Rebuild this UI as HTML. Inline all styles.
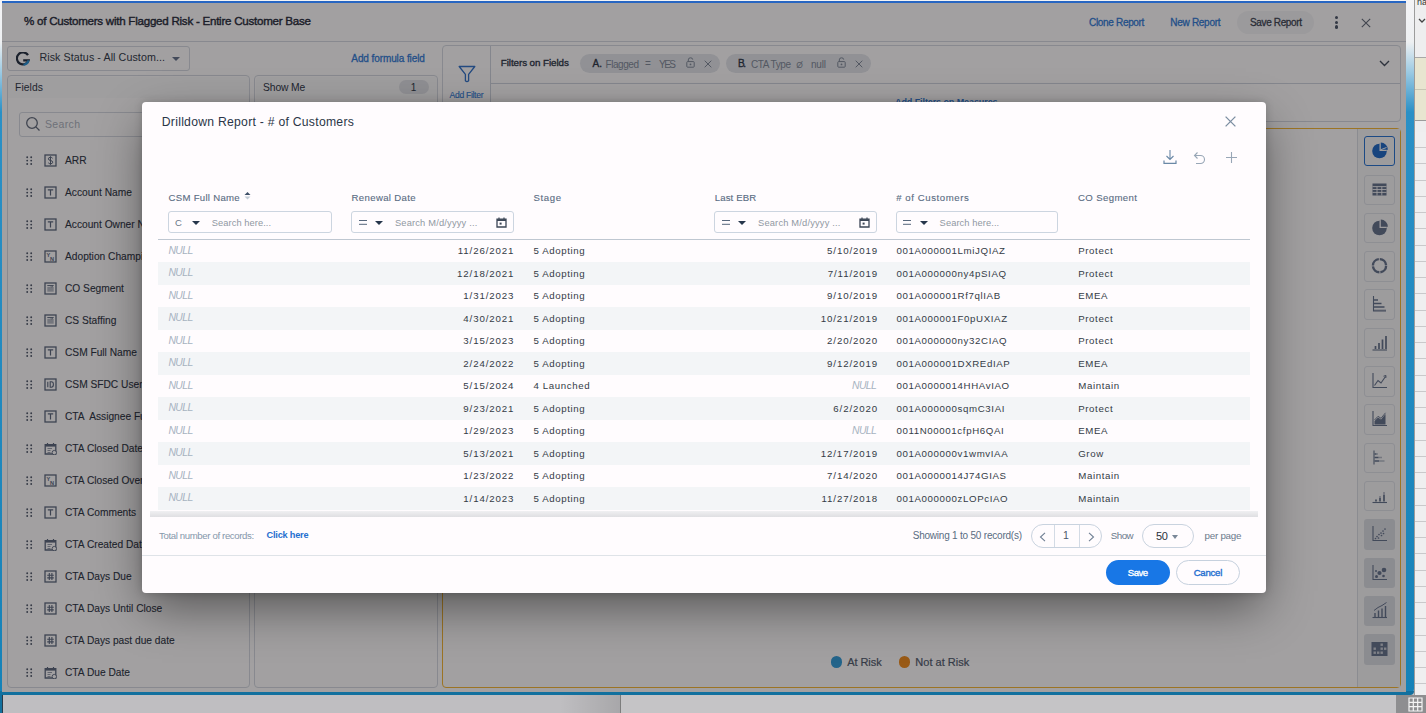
<!DOCTYPE html>
<html><head><meta charset="utf-8">
<style>
*{box-sizing:border-box;margin:0;padding:0}
html,body{width:1426px;height:713px;overflow:hidden;background:#c6c5c7;font-family:"Liberation Sans",sans-serif;position:relative}
.a{position:absolute;white-space:pre}
.L{position:absolute;left:0;top:0;width:1426px;height:713px}
.bx{position:absolute;border:1px solid #d3d9e1;border-radius:4px}
</style></head>
<body>
<!-- desktop / other windows -->
<div class="a" style="left:0;top:695px;width:620px;height:18px;background:#bfbec1"></div>
<div class="a" style="left:0;top:695px;width:2px;height:18px;background:#12709e"></div>
<div class="a" style="left:2px;top:695px;width:1px;height:18px;background:#2a3a48"></div>
<div class="a" style="left:560px;top:695px;width:60px;height:18px;background:linear-gradient(90deg,rgba(0,0,0,0),rgba(0,0,0,.12))"></div>
<div class="a" style="left:620px;top:695px;width:806px;height:18px;background:#c5c4c6;border-left:1px solid #7d7d7d"></div>
<div class="a" style="left:1396px;top:695px;width:30px;height:18px;background:#8e8e90"></div>
<svg class="a" style="left:1408px;top:697px" width="15" height="15" viewBox="0 0 15 15"><path d="M1 1H14V14H1ZM1 5.3H14M1 9.7H14M5.3 1V14M9.7 1V14" fill="none" stroke="#f4f4f4" stroke-width="1.2"/></svg>
<!-- spreadsheet on right -->
<div class="a" style="left:1414px;top:0;width:12px;height:695px;background:#efeff0;border-left:1px solid #9c9c9c;
  background-image:repeating-linear-gradient(180deg,rgba(0,0,0,0) 0,rgba(0,0,0,0) 15.2px,#c9c9cb 15.2px,#c9c9cb 16.25px);background-position:0 132px;background-repeat:repeat-y"></div>
<div class="a" style="left:1415px;top:0;width:11px;height:132px;background:#eeeeef"></div>
<div class="a" style="left:1415px;top:58px;width:11px;height:62px;background:#e8e5d0"></div>
<div class="a" style="left:1415px;top:57px;width:11px;height:1px;background:#a8a8a8"></div>
<div class="a" style="left:1415px;top:89px;width:11px;height:1px;background:#c9c6b4"></div>
<div class="a" style="left:1415px;top:120px;width:11px;height:1px;background:#9c9c9c"></div>
<div class="a" style="left:1417px;top:0;font-size:9px;line-height:4px;color:#333">na</div>
<svg class="a" style="left:1418px;top:18px" width="8" height="6" viewBox="0 0 8 6"><path d="M1 1L4 4L7 1" fill="none" stroke="#444" stroke-width="1.3"/></svg>
<!-- window frame -->
<div class="a" style="left:0;top:0;width:1414px;height:695px;background:linear-gradient(180deg,#f4f4f6 0,#eef0f2 42px,#9ccae3 72px,#2a90c6 112px,#1582b8 100%);border-radius:0 0 6px 0"></div>
<div class="a" style="left:0;top:691px;width:1414px;height:4px;background:#12709e;border-radius:0 0 6px 0"></div>
<!-- app -->
<div class="a" style="left:2px;top:3px;width:1404px;height:689px;overflow:hidden;background:#fff">
<div class="L" style="left:-2px;top:-3px">
<div class="a" style="left:0;top:0;width:1406px;height:42px;background:#fff;border-bottom:1px solid #d3d9e1"></div>
<div class="a" style="left:1237px;top:11px;width:77px;height:23px;border-radius:12px;background:#f4f5f7"></div>
<div class="a" style="left:1334.8px;top:15.9px;width:3.4px;height:3.4px;border-radius:2px;background:#465264"></div>
<div class="a" style="left:1334.8px;top:20.6px;width:3.4px;height:3.4px;border-radius:2px;background:#465264"></div>
<div class="a" style="left:1334.8px;top:25.4px;width:3.4px;height:3.4px;border-radius:2px;background:#465264"></div>
<svg class="a" style="left:1361px;top:18px" width="10" height="10" viewBox="0 0 10 10"><path d="M.8 .8L9.2 9.2M9.2 .8L.8 9.2" stroke="#5e6876" stroke-width="1.1"/></svg>
<div class="bx" style="left:7px;top:45.5px;width:183px;height:25px;border-radius:3px"></div>
<svg class="a" style="left:16px;top:52px" width="14" height="14" viewBox="0 0 14 14"><path d="M12 3.2A6 6 0 1 0 12.6 8.3H7.2" fill="none" stroke="#1d2a3c" stroke-width="2.2"/><path d="M12.6 8.3A6 6 0 0 1 7.5 12.8" fill="none" stroke="#1f8fd6" stroke-width="2.2"/></svg>
<div class="a" style="left:171.5px;top:56.5px;width:0;height:0;border-left:4px solid transparent;border-right:4px solid transparent;border-top:4px solid #607089"></div>
<div class="bx" style="left:7px;top:75px;width:243px;height:612.5px"></div>
<div class="a" style="left:8px;top:76.5px;width:241px;height:21.5px;background:#fafbfc;border-radius:3px 3px 0 0"></div>
<div class="bx" style="left:19px;top:111.5px;width:240px;height:25px;border-radius:3px"></div>
<svg class="a" style="left:25px;top:116px" width="16" height="16" viewBox="0 0 16 16"><circle cx="7" cy="7" r="5.3" fill="none" stroke="#5c6778" stroke-width="1.3"/><path d="M10.9 10.9L14.5 14.5" stroke="#5c6778" stroke-width="1.3"/></svg>
<svg class="a" style="left:26.3px;top:155.8px" width="7" height="10" viewBox="0 0 7 10"><circle cx="1.2" cy="1.2" r=".95" fill="#4a5567"/><circle cx="1.2" cy="4.6" r=".95" fill="#4a5567"/><circle cx="1.2" cy="8" r=".95" fill="#4a5567"/><circle cx="5.2" cy="1.2" r=".95" fill="#4a5567"/><circle cx="5.2" cy="4.6" r=".95" fill="#4a5567"/><circle cx="5.2" cy="8" r=".95" fill="#4a5567"/></svg>
<svg class="a" style="left:43.8px;top:153.9px" width="13" height="13" viewBox="0 0 13 13"><rect x="1" y="1" width="11" height="11" fill="none" stroke="#56647a" stroke-width="1.3"/><path d="M8.6 4.3Q8 3.3 6.5 3.3Q4.4 3.3 4.4 4.9Q4.4 6.2 6.5 6.5Q8.7 6.8 8.7 8.2Q8.7 9.8 6.5 9.8Q5 9.8 4.3 8.8M6.5 2.3V10.8" fill="none" stroke="#56647a" stroke-width="1"/></svg>
<svg class="a" style="left:26.3px;top:187.8px" width="7" height="10" viewBox="0 0 7 10"><circle cx="1.2" cy="1.2" r=".95" fill="#4a5567"/><circle cx="1.2" cy="4.6" r=".95" fill="#4a5567"/><circle cx="1.2" cy="8" r=".95" fill="#4a5567"/><circle cx="5.2" cy="1.2" r=".95" fill="#4a5567"/><circle cx="5.2" cy="4.6" r=".95" fill="#4a5567"/><circle cx="5.2" cy="8" r=".95" fill="#4a5567"/></svg>
<svg class="a" style="left:43.8px;top:185.9px" width="13" height="13" viewBox="0 0 13 13"><rect x="1" y="1" width="11" height="11" fill="none" stroke="#56647a" stroke-width="1.3"/><path d="M3.8 3.8H9.2M6.5 3.8V9.6" stroke="#56647a" stroke-width="1.2" fill="none"/></svg>
<svg class="a" style="left:26.3px;top:219.8px" width="7" height="10" viewBox="0 0 7 10"><circle cx="1.2" cy="1.2" r=".95" fill="#4a5567"/><circle cx="1.2" cy="4.6" r=".95" fill="#4a5567"/><circle cx="1.2" cy="8" r=".95" fill="#4a5567"/><circle cx="5.2" cy="1.2" r=".95" fill="#4a5567"/><circle cx="5.2" cy="4.6" r=".95" fill="#4a5567"/><circle cx="5.2" cy="8" r=".95" fill="#4a5567"/></svg>
<svg class="a" style="left:43.8px;top:217.9px" width="13" height="13" viewBox="0 0 13 13"><rect x="1" y="1" width="11" height="11" fill="none" stroke="#56647a" stroke-width="1.3"/><path d="M3.8 3.8H9.2M6.5 3.8V9.6" stroke="#56647a" stroke-width="1.2" fill="none"/></svg>
<svg class="a" style="left:26.3px;top:251.8px" width="7" height="10" viewBox="0 0 7 10"><circle cx="1.2" cy="1.2" r=".95" fill="#4a5567"/><circle cx="1.2" cy="4.6" r=".95" fill="#4a5567"/><circle cx="1.2" cy="8" r=".95" fill="#4a5567"/><circle cx="5.2" cy="1.2" r=".95" fill="#4a5567"/><circle cx="5.2" cy="4.6" r=".95" fill="#4a5567"/><circle cx="5.2" cy="8" r=".95" fill="#4a5567"/></svg>
<svg class="a" style="left:43.8px;top:249.9px" width="13" height="13" viewBox="0 0 13 13"><rect x="1" y="1" width="11" height="11" fill="none" stroke="#56647a" stroke-width="1.3"/><text x="2.6" y="7" font-size="5.6" fill="#56647a" font-family="Liberation Sans" font-weight="bold">Y</text><text x="6" y="10.6" font-size="5.6" fill="#56647a" font-family="Liberation Sans" font-weight="bold">N</text></svg>
<svg class="a" style="left:26.3px;top:283.8px" width="7" height="10" viewBox="0 0 7 10"><circle cx="1.2" cy="1.2" r=".95" fill="#4a5567"/><circle cx="1.2" cy="4.6" r=".95" fill="#4a5567"/><circle cx="1.2" cy="8" r=".95" fill="#4a5567"/><circle cx="5.2" cy="1.2" r=".95" fill="#4a5567"/><circle cx="5.2" cy="4.6" r=".95" fill="#4a5567"/><circle cx="5.2" cy="8" r=".95" fill="#4a5567"/></svg>
<svg class="a" style="left:43.8px;top:281.9px" width="13" height="13" viewBox="0 0 13 13"><rect x="1" y="1" width="11" height="11" fill="none" stroke="#56647a" stroke-width="1.3"/><path d="M3.3 5H9.7V9.7H3.3Z" fill="#56647a" opacity=".45"/><path d="M3.3 3.6H9.7" stroke="#56647a" stroke-width="1"/><path d="M6.8 4.2L7.8 5.2L8.8 4.2" stroke="#56647a" stroke-width=".8" fill="none"/></svg>
<svg class="a" style="left:26.3px;top:315.8px" width="7" height="10" viewBox="0 0 7 10"><circle cx="1.2" cy="1.2" r=".95" fill="#4a5567"/><circle cx="1.2" cy="4.6" r=".95" fill="#4a5567"/><circle cx="1.2" cy="8" r=".95" fill="#4a5567"/><circle cx="5.2" cy="1.2" r=".95" fill="#4a5567"/><circle cx="5.2" cy="4.6" r=".95" fill="#4a5567"/><circle cx="5.2" cy="8" r=".95" fill="#4a5567"/></svg>
<svg class="a" style="left:43.8px;top:313.9px" width="13" height="13" viewBox="0 0 13 13"><rect x="1" y="1" width="11" height="11" fill="none" stroke="#56647a" stroke-width="1.3"/><path d="M3.3 5H9.7V9.7H3.3Z" fill="#56647a" opacity=".45"/><path d="M3.3 3.6H9.7" stroke="#56647a" stroke-width="1"/><path d="M6.8 4.2L7.8 5.2L8.8 4.2" stroke="#56647a" stroke-width=".8" fill="none"/></svg>
<svg class="a" style="left:26.3px;top:347.8px" width="7" height="10" viewBox="0 0 7 10"><circle cx="1.2" cy="1.2" r=".95" fill="#4a5567"/><circle cx="1.2" cy="4.6" r=".95" fill="#4a5567"/><circle cx="1.2" cy="8" r=".95" fill="#4a5567"/><circle cx="5.2" cy="1.2" r=".95" fill="#4a5567"/><circle cx="5.2" cy="4.6" r=".95" fill="#4a5567"/><circle cx="5.2" cy="8" r=".95" fill="#4a5567"/></svg>
<svg class="a" style="left:43.8px;top:345.9px" width="13" height="13" viewBox="0 0 13 13"><rect x="1" y="1" width="11" height="11" fill="none" stroke="#56647a" stroke-width="1.3"/><path d="M3.8 3.8H9.2M6.5 3.8V9.6" stroke="#56647a" stroke-width="1.2" fill="none"/></svg>
<svg class="a" style="left:26.3px;top:379.8px" width="7" height="10" viewBox="0 0 7 10"><circle cx="1.2" cy="1.2" r=".95" fill="#4a5567"/><circle cx="1.2" cy="4.6" r=".95" fill="#4a5567"/><circle cx="1.2" cy="8" r=".95" fill="#4a5567"/><circle cx="5.2" cy="1.2" r=".95" fill="#4a5567"/><circle cx="5.2" cy="4.6" r=".95" fill="#4a5567"/><circle cx="5.2" cy="8" r=".95" fill="#4a5567"/></svg>
<svg class="a" style="left:43.8px;top:377.9px" width="13" height="13" viewBox="0 0 13 13"><rect x="1" y="1" width="11" height="11" fill="none" stroke="#56647a" stroke-width="1.3"/><path d="M3.8 3.8V9.2M6.2 3.8V9.2H7.3Q9.4 9.2 9.4 6.5Q9.4 3.8 7.3 3.8Z" fill="none" stroke="#56647a" stroke-width="1.1"/></svg>
<svg class="a" style="left:26.3px;top:411.8px" width="7" height="10" viewBox="0 0 7 10"><circle cx="1.2" cy="1.2" r=".95" fill="#4a5567"/><circle cx="1.2" cy="4.6" r=".95" fill="#4a5567"/><circle cx="1.2" cy="8" r=".95" fill="#4a5567"/><circle cx="5.2" cy="1.2" r=".95" fill="#4a5567"/><circle cx="5.2" cy="4.6" r=".95" fill="#4a5567"/><circle cx="5.2" cy="8" r=".95" fill="#4a5567"/></svg>
<svg class="a" style="left:43.8px;top:409.9px" width="13" height="13" viewBox="0 0 13 13"><rect x="1" y="1" width="11" height="11" fill="none" stroke="#56647a" stroke-width="1.3"/><path d="M3.8 3.8H9.2M6.5 3.8V9.6" stroke="#56647a" stroke-width="1.2" fill="none"/></svg>
<svg class="a" style="left:26.3px;top:443.8px" width="7" height="10" viewBox="0 0 7 10"><circle cx="1.2" cy="1.2" r=".95" fill="#4a5567"/><circle cx="1.2" cy="4.6" r=".95" fill="#4a5567"/><circle cx="1.2" cy="8" r=".95" fill="#4a5567"/><circle cx="5.2" cy="1.2" r=".95" fill="#4a5567"/><circle cx="5.2" cy="4.6" r=".95" fill="#4a5567"/><circle cx="5.2" cy="8" r=".95" fill="#4a5567"/></svg>
<svg class="a" style="left:43.8px;top:441.9px" width="13" height="13" viewBox="0 0 13 13"><path d="M1.2 2.6H11.8V12H1.2Z" fill="none" stroke="#56647a" stroke-width="1.3"/><path d="M1.2 2.6H11.8V4.6H1.2Z" fill="#56647a"/><path d="M3.5 1V3M9.5 1V3" stroke="#56647a" stroke-width="1.2"/><path d="M3.5 6.5H8M3.5 8.5H6.5M3.5 10.5H6.5" stroke="#56647a" stroke-width=".9" opacity=".7"/><circle cx="10.3" cy="10.6" r="2.2" fill="#fff" stroke="#56647a" stroke-width=".9"/></svg>
<svg class="a" style="left:26.3px;top:475.8px" width="7" height="10" viewBox="0 0 7 10"><circle cx="1.2" cy="1.2" r=".95" fill="#4a5567"/><circle cx="1.2" cy="4.6" r=".95" fill="#4a5567"/><circle cx="1.2" cy="8" r=".95" fill="#4a5567"/><circle cx="5.2" cy="1.2" r=".95" fill="#4a5567"/><circle cx="5.2" cy="4.6" r=".95" fill="#4a5567"/><circle cx="5.2" cy="8" r=".95" fill="#4a5567"/></svg>
<svg class="a" style="left:43.8px;top:473.9px" width="13" height="13" viewBox="0 0 13 13"><rect x="1" y="1" width="11" height="11" fill="none" stroke="#56647a" stroke-width="1.3"/><text x="2.6" y="7" font-size="5.6" fill="#56647a" font-family="Liberation Sans" font-weight="bold">Y</text><text x="6" y="10.6" font-size="5.6" fill="#56647a" font-family="Liberation Sans" font-weight="bold">N</text></svg>
<svg class="a" style="left:26.3px;top:507.8px" width="7" height="10" viewBox="0 0 7 10"><circle cx="1.2" cy="1.2" r=".95" fill="#4a5567"/><circle cx="1.2" cy="4.6" r=".95" fill="#4a5567"/><circle cx="1.2" cy="8" r=".95" fill="#4a5567"/><circle cx="5.2" cy="1.2" r=".95" fill="#4a5567"/><circle cx="5.2" cy="4.6" r=".95" fill="#4a5567"/><circle cx="5.2" cy="8" r=".95" fill="#4a5567"/></svg>
<svg class="a" style="left:43.8px;top:505.9px" width="13" height="13" viewBox="0 0 13 13"><rect x="1" y="1" width="11" height="11" fill="none" stroke="#56647a" stroke-width="1.3"/><path d="M3.8 3.8H9.2M6.5 3.8V9.6" stroke="#56647a" stroke-width="1.2" fill="none"/></svg>
<svg class="a" style="left:26.3px;top:539.8px" width="7" height="10" viewBox="0 0 7 10"><circle cx="1.2" cy="1.2" r=".95" fill="#4a5567"/><circle cx="1.2" cy="4.6" r=".95" fill="#4a5567"/><circle cx="1.2" cy="8" r=".95" fill="#4a5567"/><circle cx="5.2" cy="1.2" r=".95" fill="#4a5567"/><circle cx="5.2" cy="4.6" r=".95" fill="#4a5567"/><circle cx="5.2" cy="8" r=".95" fill="#4a5567"/></svg>
<svg class="a" style="left:43.8px;top:537.9px" width="13" height="13" viewBox="0 0 13 13"><path d="M1.2 2.6H11.8V12H1.2Z" fill="none" stroke="#56647a" stroke-width="1.3"/><path d="M1.2 2.6H11.8V4.6H1.2Z" fill="#56647a"/><path d="M3.5 1V3M9.5 1V3" stroke="#56647a" stroke-width="1.2"/><path d="M3.5 6.5H8M3.5 8.5H6.5M3.5 10.5H6.5" stroke="#56647a" stroke-width=".9" opacity=".7"/><circle cx="10.3" cy="10.6" r="2.2" fill="#fff" stroke="#56647a" stroke-width=".9"/></svg>
<svg class="a" style="left:26.3px;top:571.8px" width="7" height="10" viewBox="0 0 7 10"><circle cx="1.2" cy="1.2" r=".95" fill="#4a5567"/><circle cx="1.2" cy="4.6" r=".95" fill="#4a5567"/><circle cx="1.2" cy="8" r=".95" fill="#4a5567"/><circle cx="5.2" cy="1.2" r=".95" fill="#4a5567"/><circle cx="5.2" cy="4.6" r=".95" fill="#4a5567"/><circle cx="5.2" cy="8" r=".95" fill="#4a5567"/></svg>
<svg class="a" style="left:43.8px;top:569.9px" width="13" height="13" viewBox="0 0 13 13"><rect x="1" y="1" width="11" height="11" fill="none" stroke="#56647a" stroke-width="1.3"/><path d="M5.3 3V10M7.9 3V10M3.2 5.3H9.8M3.2 7.9H9.8" fill="none" stroke="#56647a" stroke-width="1.1"/></svg>
<svg class="a" style="left:26.3px;top:603.8px" width="7" height="10" viewBox="0 0 7 10"><circle cx="1.2" cy="1.2" r=".95" fill="#4a5567"/><circle cx="1.2" cy="4.6" r=".95" fill="#4a5567"/><circle cx="1.2" cy="8" r=".95" fill="#4a5567"/><circle cx="5.2" cy="1.2" r=".95" fill="#4a5567"/><circle cx="5.2" cy="4.6" r=".95" fill="#4a5567"/><circle cx="5.2" cy="8" r=".95" fill="#4a5567"/></svg>
<svg class="a" style="left:43.8px;top:601.9px" width="13" height="13" viewBox="0 0 13 13"><rect x="1" y="1" width="11" height="11" fill="none" stroke="#56647a" stroke-width="1.3"/><path d="M5.3 3V10M7.9 3V10M3.2 5.3H9.8M3.2 7.9H9.8" fill="none" stroke="#56647a" stroke-width="1.1"/></svg>
<svg class="a" style="left:26.3px;top:635.8px" width="7" height="10" viewBox="0 0 7 10"><circle cx="1.2" cy="1.2" r=".95" fill="#4a5567"/><circle cx="1.2" cy="4.6" r=".95" fill="#4a5567"/><circle cx="1.2" cy="8" r=".95" fill="#4a5567"/><circle cx="5.2" cy="1.2" r=".95" fill="#4a5567"/><circle cx="5.2" cy="4.6" r=".95" fill="#4a5567"/><circle cx="5.2" cy="8" r=".95" fill="#4a5567"/></svg>
<svg class="a" style="left:43.8px;top:633.9px" width="13" height="13" viewBox="0 0 13 13"><rect x="1" y="1" width="11" height="11" fill="none" stroke="#56647a" stroke-width="1.3"/><path d="M5.3 3V10M7.9 3V10M3.2 5.3H9.8M3.2 7.9H9.8" fill="none" stroke="#56647a" stroke-width="1.1"/></svg>
<svg class="a" style="left:26.3px;top:667.8px" width="7" height="10" viewBox="0 0 7 10"><circle cx="1.2" cy="1.2" r=".95" fill="#4a5567"/><circle cx="1.2" cy="4.6" r=".95" fill="#4a5567"/><circle cx="1.2" cy="8" r=".95" fill="#4a5567"/><circle cx="5.2" cy="1.2" r=".95" fill="#4a5567"/><circle cx="5.2" cy="4.6" r=".95" fill="#4a5567"/><circle cx="5.2" cy="8" r=".95" fill="#4a5567"/></svg>
<svg class="a" style="left:43.8px;top:665.9px" width="13" height="13" viewBox="0 0 13 13"><path d="M1.2 2.6H11.8V12H1.2Z" fill="none" stroke="#56647a" stroke-width="1.3"/><path d="M1.2 2.6H11.8V4.6H1.2Z" fill="#56647a"/><path d="M3.5 1V3M9.5 1V3" stroke="#56647a" stroke-width="1.2"/><path d="M3.5 6.5H8M3.5 8.5H6.5M3.5 10.5H6.5" stroke="#56647a" stroke-width=".9" opacity=".7"/><circle cx="10.3" cy="10.6" r="2.2" fill="#fff" stroke="#56647a" stroke-width=".9"/></svg>
<div class="bx" style="left:254.4px;top:75px;width:183.4px;height:612.5px"></div>
<div class="a" style="left:256px;top:76.5px;width:181px;height:21.5px;background:#fafbfc;border-radius:3px 3px 0 0"></div>
<div class="a" style="left:399px;top:80.3px;width:30px;height:13.4px;border-radius:7px;background:#dfe3e8"></div>
<div class="bx" style="left:442px;top:45.1px;width:959px;height:77px;border-radius:4px"></div>
<div class="a" style="left:490px;top:46px;width:1px;height:75.5px;background:#cdd4dd"></div>
<div class="a" style="left:491px;top:83.3px;width:909px;height:1px;background:#cdd4dd"></div>
<svg class="a" style="left:458px;top:65px" width="18" height="18" viewBox="0 0 18 18"><path d="M1.2 1.5H16.8L10.6 9.3V15.8Q9 17.4 7.4 15.8V9.3Z" fill="none" stroke="#2a6fc8" stroke-width="1.3" stroke-linejoin="round"/></svg>
<div class="a" style="left:580px;top:54px;width:140px;height:19px;border-radius:10px;background:#e2e6eb"></div>
<div class="a" style="left:726px;top:54px;width:145px;height:19px;border-radius:10px;background:#e2e6eb"></div>
<svg class="a" style="left:685.5px;top:57px" width="9" height="11" viewBox="0 0 9 11"><path d="M2.3 4.6V2.9Q2.3 .8 4.5 .8Q6.7 .8 6.7 2.6" fill="none" stroke="#7b8696" stroke-width="1"/><rect x=".8" y="4.6" width="7.4" height="5.6" rx=".8" fill="none" stroke="#7b8696" stroke-width="1"/><circle cx="4.5" cy="7.4" r=".9" fill="#7b8696"/></svg>
<svg class="a" style="left:836.5px;top:57px" width="9" height="11" viewBox="0 0 9 11"><path d="M2.3 4.6V2.9Q2.3 .8 4.5 .8Q6.7 .8 6.7 2.6" fill="none" stroke="#7b8696" stroke-width="1"/><rect x=".8" y="4.6" width="7.4" height="5.6" rx=".8" fill="none" stroke="#7b8696" stroke-width="1"/><circle cx="4.5" cy="7.4" r=".9" fill="#7b8696"/></svg>
<svg class="a" style="left:703.5px;top:59.5px" width="8" height="8" viewBox="0 0 8 8"><path d="M.7 .7L7.3 7.3M7.3 .7L.7 7.3" stroke="#7b8696" stroke-width="1"/></svg>
<svg class="a" style="left:854.5px;top:59.5px" width="8" height="8" viewBox="0 0 8 8"><path d="M.7 .7L7.3 7.3M7.3 .7L.7 7.3" stroke="#7b8696" stroke-width="1"/></svg>
<svg class="a" style="left:1378.5px;top:59.5px" width="11" height="7" viewBox="0 0 11 7"><path d="M1 1L5.5 5.5L10 1" fill="none" stroke="#3d4858" stroke-width="1.4"/></svg>
<div class="a" style="left:442px;top:128px;width:959px;height:560px;border:1px solid #f5b62e;border-radius:4px"></div>
<div class="a" style="left:1356.5px;top:129px;width:1px;height:558px;background:#d9dee5"></div>
<div class="a" style="left:1357.5px;top:129px;width:42px;height:558px;background:#f7f8f9"></div>
<div class="a" style="left:1364.3px;top:136.2px;width:30.5px;height:29.5px;border:1.3px solid #1f6fd0;border-radius:3px;background:#f7f8f9"></div>
<svg class="a" style="left:1365px;top:136.2px" width="29" height="29" viewBox="0 0 29 29"><circle cx="14.5" cy="15" r="7.3" fill="#1766c4"/><path d="M14.5 15V7.7A7.3 7.3 0 0 1 21.8 15Z" fill="#f7f8f9"/><path d="M15.8 13.7V6.6A7.1 7.1 0 0 1 22.9 13.7Z" fill="#1766c4"/><path d="M15.8 13.7L21.5 11.5" stroke="#f7f8f9" stroke-width="1"/></svg>
<div class="a" style="left:1364.3px;top:174.5px;width:30.5px;height:30.5px;border:1px solid #dde2e8;border-radius:3px;background:#f7f8f9"></div>
<svg class="a" style="left:1365px;top:174.5px" width="29" height="29" viewBox="0 0 29 29"><rect x="7.5" y="8.5" width="14" height="12" fill="#5f6f88"/><path d="M7.5 11.6H21.5M7.5 14.5H21.5M7.5 17.4H21.5M12 11.6V20.5M16.8 11.6V20.5" stroke="#f7f8f9" stroke-width=".9"/></svg>
<div class="a" style="left:1364.3px;top:212.8px;width:30.5px;height:30.5px;border:1px solid #dde2e8;border-radius:3px;background:#f7f8f9"></div>
<svg class="a" style="left:1365px;top:212.8px" width="29" height="29" viewBox="0 0 29 29"><circle cx="14.5" cy="15" r="7.3" fill="#5f6f88"/><path d="M14.5 15V7.7A7.3 7.3 0 0 1 21.8 15Z" fill="#f7f8f9"/><path d="M15.8 13.7V6.6A7.1 7.1 0 0 1 22.9 13.7Z" fill="#5f6f88"/></svg>
<div class="a" style="left:1364.3px;top:251.1px;width:30.5px;height:30.5px;border:1px solid #dde2e8;border-radius:3px;background:#f7f8f9"></div>
<svg class="a" style="left:1365px;top:251.1px" width="29" height="29" viewBox="0 0 29 29"><circle cx="14.5" cy="14.7" r="6.6" fill="none" stroke="#5f6f88" stroke-width="2.4" stroke-dasharray="9.4 1.0"/></svg>
<div class="a" style="left:1364.3px;top:289.4px;width:30.5px;height:30.5px;border:1px solid #dde2e8;border-radius:3px;background:#f7f8f9"></div>
<svg class="a" style="left:1365px;top:289.4px" width="29" height="29" viewBox="0 0 29 29"><path d="M8.5 7V22H21" fill="none" stroke="#5f6f88" stroke-width="1.1"/><path d="M9 11H13M9 14.5H16.5M9 18H19.5" stroke="#5f6f88" stroke-width="1.7"/><path d="M9 21.2H21" stroke="#5f6f88" stroke-width=".8"/></svg>
<div class="a" style="left:1364.3px;top:327.7px;width:30.5px;height:30.5px;border:1px solid #dde2e8;border-radius:3px;background:#f7f8f9"></div>
<svg class="a" style="left:1365px;top:327.7px" width="29" height="29" viewBox="0 0 29 29"><path d="M7.5 22H22" stroke="#5f6f88" stroke-width="1.1"/><path d="M10.5 21V18M14 21V15M17.5 21V11.5M21 21V8" stroke="#5f6f88" stroke-width="1.7"/></svg>
<div class="a" style="left:1364.3px;top:366.0px;width:30.5px;height:30.5px;border:1px solid #dde2e8;border-radius:3px;background:#f7f8f9"></div>
<svg class="a" style="left:1365px;top:366.0px" width="29" height="29" viewBox="0 0 29 29"><path d="M8 7V21.5H22" fill="none" stroke="#5f6f88" stroke-width="1.1"/><path d="M9.5 19.5L13 14.5L16 17L20.5 10.5" fill="none" stroke="#5f6f88" stroke-width="1.1"/><path d="M18.5 10.2L21 9.5L20.8 12" fill="none" stroke="#5f6f88" stroke-width="1"/></svg>
<div class="a" style="left:1364.3px;top:404.3px;width:30.5px;height:30.5px;border:1px solid #dde2e8;border-radius:3px;background:#f7f8f9"></div>
<svg class="a" style="left:1365px;top:404.3px" width="29" height="29" viewBox="0 0 29 29"><path d="M8 7V21.5H22" fill="none" stroke="#5f6f88" stroke-width="1.1"/><path d="M9.5 20.5V17L13 13.5L16 15.5L20.5 10V20.5Z" fill="#5f6f88"/><path d="M9.5 16L13 12.3L16 14.3L20.5 8.8" fill="none" stroke="#5f6f88" stroke-width=".9"/></svg>
<div class="a" style="left:1364.3px;top:442.6px;width:30.5px;height:30.5px;border:1px solid #dde2e8;border-radius:3px;background:#f7f8f9"></div>
<svg class="a" style="left:1365px;top:442.6px" width="29" height="29" viewBox="0 0 29 29"><path d="M9 7.5V21.5" stroke="#5f6f88" stroke-width="1.1"/><path d="M9.5 11H11.5M9.5 14.5H13.5M9.5 18H14" stroke="#5f6f88" stroke-width="1.6"/><path d="M11.5 11H13M13.5 14.5H17M14 18H19.5" stroke="#5f6f88" stroke-width="1.6" opacity=".45"/></svg>
<div class="a" style="left:1364.3px;top:480.9px;width:30.5px;height:30.5px;border:1px solid #dde2e8;border-radius:3px;background:#f7f8f9"></div>
<svg class="a" style="left:1365px;top:480.9px" width="29" height="29" viewBox="0 0 29 29"><path d="M7.5 21.5H22" stroke="#5f6f88" stroke-width="1.1"/><path d="M11 20.5V18.5M15 20.5V17M19 20.5V14" stroke="#5f6f88" stroke-width="1.7"/><path d="M15 17V15M19 14V11" stroke="#5f6f88" stroke-width="1.7" opacity=".45"/></svg>
<div class="a" style="left:1364.3px;top:519.2px;width:30.5px;height:30.5px;border-radius:3px;background:#d9dde3"></div>
<svg class="a" style="left:1365px;top:519.2px" width="29" height="29" viewBox="0 0 29 29"><path d="M8 7V21.5H22" fill="none" stroke="#5f6f88" stroke-width="1.1"/><circle cx="10.5" cy="19.5" r=".85" fill="#5f6f88"/><circle cx="12" cy="17.5" r=".85" fill="#5f6f88"/><circle cx="13.5" cy="19" r=".85" fill="#5f6f88"/><circle cx="14" cy="15.5" r=".85" fill="#5f6f88"/><circle cx="16" cy="14" r=".85" fill="#5f6f88"/><circle cx="16.5" cy="16.5" r=".85" fill="#5f6f88"/><circle cx="18" cy="12" r=".85" fill="#5f6f88"/><circle cx="18.5" cy="14.5" r=".85" fill="#5f6f88"/><circle cx="20" cy="10" r=".85" fill="#5f6f88"/></svg>
<div class="a" style="left:1364.3px;top:557.5px;width:30.5px;height:30.5px;border-radius:3px;background:#d9dde3"></div>
<svg class="a" style="left:1365px;top:557.5px" width="29" height="29" viewBox="0 0 29 29"><path d="M8 7V21.5H22" fill="none" stroke="#5f6f88" stroke-width="1.1"/><circle cx="11.5" cy="18.5" r="1.5" fill="#5f6f88"/><circle cx="14.5" cy="15" r="2.1" fill="#5f6f88"/><circle cx="19" cy="12" r="2.3" fill="#5f6f88"/><circle cx="18.5" cy="18" r="1.3" fill="#5f6f88"/><circle cx="11" cy="13" r="1" fill="#5f6f88"/></svg>
<div class="a" style="left:1364.3px;top:595.8px;width:30.5px;height:30.5px;border-radius:3px;background:#d9dde3"></div>
<svg class="a" style="left:1365px;top:595.8px" width="29" height="29" viewBox="0 0 29 29"><path d="M7.5 21.5H22" stroke="#5f6f88" stroke-width="1.1"/><path d="M10 21V17M13.5 21V14.5M17 21V12.5M20.5 21V10" stroke="#5f6f88" stroke-width="1.4"/><path d="M9 14.5L13 11.5L17 9.5L21.5 6.5" fill="none" stroke="#5f6f88" stroke-width="1"/></svg>
<div class="a" style="left:1364.3px;top:634.1px;width:30.5px;height:30.5px;border-radius:3px;background:#d9dde3"></div>
<svg class="a" style="left:1365px;top:634.1px" width="29" height="29" viewBox="0 0 29 29"><rect x="6.5" y="8" width="16" height="14" fill="#5f6f88"/><rect x="15.5" y="9.5" width="2.4" height="2.4" fill="#c4cad3"/><rect x="8.5" y="13.5" width="2.4" height="2.4" fill="#c4cad3"/><rect x="15.5" y="13.5" width="2.4" height="2.4" fill="#c4cad3"/><rect x="19" y="13.5" width="2.4" height="2.4" fill="#c4cad3"/><rect x="8.5" y="17.5" width="2.4" height="2.4" fill="#c4cad3"/><rect x="12" y="17.5" width="2.4" height="2.4" fill="#c4cad3"/><rect x="15.5" y="17.5" width="2.4" height="2.4" fill="#c4cad3"/></svg>
<div class="a" style="left:830.5px;top:656px;width:11.5px;height:11.5px;border-radius:6px;background:#2a9ad8"></div>
<div class="a" style="left:898.7px;top:656px;width:11.5px;height:11.5px;border-radius:6px;background:#f08a17"></div>
<div class="a" style="left:24.00px;top:14.98px;font-size:11.6px;line-height:11.6px;color:#1c2635;letter-spacing:-0.258px;-webkit-text-stroke:0.4px #1c2635">% of Customers with Flagged Risk - Entire Customer Base</div>
<div class="a" style="left:1089.00px;top:17.93px;font-size:10px;line-height:10px;color:#2a78d6;letter-spacing:-0.320px;-webkit-text-stroke:0.3px #2a78d6">Clone Report</div>
<div class="a" style="left:1170.30px;top:17.93px;font-size:10px;line-height:10px;color:#2a78d6;letter-spacing:-0.290px;-webkit-text-stroke:0.3px #2a78d6">New Report</div>
<div class="a" style="left:1250.00px;top:17.84px;font-size:10px;line-height:10px;color:#36404e;letter-spacing:-0.359px;-webkit-text-stroke:0.3px #36404e">Save Report</div>
<div class="a" style="left:39.40px;top:52.14px;font-size:10.7px;line-height:10.7px;color:#2a3443;letter-spacing:0.079px">Risk Status - All Custom...</div>
<div class="a" style="left:351.30px;top:54.14px;font-size:10px;line-height:10px;color:#2a78d6;letter-spacing:-0.090px;-webkit-text-stroke:0.3px #2a78d6">Add formula field</div>
<div class="a" style="left:15.00px;top:83.28px;font-size:10.3px;line-height:10.3px;color:#263142;letter-spacing:0.106px">Fields</div>
<div class="a" style="left:45.00px;top:118.61px;font-size:10.5px;line-height:10.5px;color:#a9b1bc;letter-spacing:0.344px">Search</div>
<div class="a" style="left:65.00px;top:155.97px;font-size:10.2px;line-height:10.2px;color:#262f3d;-webkit-text-stroke:0.1px #262f3d">ARR</div>
<div class="a" style="left:65.00px;top:187.97px;font-size:10.2px;line-height:10.2px;color:#262f3d;-webkit-text-stroke:0.1px #262f3d">Account Name</div>
<div class="a" style="left:65.00px;top:219.97px;font-size:10.2px;line-height:10.2px;color:#262f3d;-webkit-text-stroke:0.1px #262f3d">Account Owner Name</div>
<div class="a" style="left:65.00px;top:251.97px;font-size:10.2px;line-height:10.2px;color:#262f3d;-webkit-text-stroke:0.1px #262f3d">Adoption Champion</div>
<div class="a" style="left:65.00px;top:283.97px;font-size:10.2px;line-height:10.2px;color:#262f3d;-webkit-text-stroke:0.1px #262f3d">CO Segment</div>
<div class="a" style="left:65.00px;top:315.97px;font-size:10.2px;line-height:10.2px;color:#262f3d;-webkit-text-stroke:0.1px #262f3d">CS Staffing</div>
<div class="a" style="left:65.00px;top:347.97px;font-size:10.2px;line-height:10.2px;color:#262f3d;-webkit-text-stroke:0.1px #262f3d">CSM Full Name</div>
<div class="a" style="left:65.00px;top:379.97px;font-size:10.2px;line-height:10.2px;color:#262f3d;-webkit-text-stroke:0.1px #262f3d">CSM SFDC User</div>
<div class="a" style="left:65.00px;top:411.97px;font-size:10.2px;line-height:10.2px;color:#262f3d;-webkit-text-stroke:0.1px #262f3d">CTA  Assignee Full Name</div>
<div class="a" style="left:65.00px;top:443.97px;font-size:10.2px;line-height:10.2px;color:#262f3d;-webkit-text-stroke:0.1px #262f3d">CTA Closed Date</div>
<div class="a" style="left:65.00px;top:475.97px;font-size:10.2px;line-height:10.2px;color:#262f3d;-webkit-text-stroke:0.1px #262f3d">CTA Closed Overdue</div>
<div class="a" style="left:65.00px;top:507.97px;font-size:10.2px;line-height:10.2px;color:#262f3d;-webkit-text-stroke:0.1px #262f3d">CTA Comments</div>
<div class="a" style="left:65.00px;top:539.97px;font-size:10.2px;line-height:10.2px;color:#262f3d;-webkit-text-stroke:0.1px #262f3d">CTA Created Date</div>
<div class="a" style="left:65.00px;top:571.97px;font-size:10.2px;line-height:10.2px;color:#262f3d;-webkit-text-stroke:0.1px #262f3d">CTA Days Due</div>
<div class="a" style="left:65.00px;top:603.97px;font-size:10.2px;line-height:10.2px;color:#262f3d;-webkit-text-stroke:0.1px #262f3d">CTA Days Until Close</div>
<div class="a" style="left:65.00px;top:635.97px;font-size:10.2px;line-height:10.2px;color:#262f3d;-webkit-text-stroke:0.1px #262f3d">CTA Days past due date</div>
<div class="a" style="left:65.00px;top:667.97px;font-size:10.2px;line-height:10.2px;color:#262f3d;-webkit-text-stroke:0.1px #262f3d">CTA Due Date</div>
<div class="a" style="left:263.00px;top:83.28px;font-size:10.3px;line-height:10.3px;color:#263142;letter-spacing:-0.106px">Show Me</div>
<div class="a" style="left:410.72px;top:82.83px;font-size:10px;line-height:10px;color:#263142">1</div>
<div class="a" style="left:449.50px;top:91.32px;font-size:8.6px;line-height:8.6px;color:#2a78d6;letter-spacing:-0.309px;-webkit-text-stroke:0.12px #2a78d6">Add Filter</div>
<div class="a" style="left:500.80px;top:57.90px;font-size:9.8px;line-height:9.8px;color:#263142;letter-spacing:-0.072px;-webkit-text-stroke:0.35px #263142">Filters on Fields</div>
<div class="a" style="left:592.50px;top:59.33px;font-size:10px;line-height:10px;color:#263142;letter-spacing:0.047px;-webkit-text-stroke:0.35px #263142">A.</div>
<div class="a" style="left:605.50px;top:59.53px;font-size:10px;line-height:10px;color:#7b8696;letter-spacing:-0.440px">Flagged</div>
<div class="a" style="left:645.08px;top:59.03px;font-size:10px;line-height:10px;color:#7b8696">=</div>
<div class="a" style="left:659.00px;top:59.53px;font-size:10px;line-height:10px;color:#7b8696;letter-spacing:-1.508px">YES</div>
<div class="a" style="left:738.00px;top:59.33px;font-size:10px;line-height:10px;color:#263142;letter-spacing:-1.453px;-webkit-text-stroke:0.35px #263142">B.</div>
<div class="a" style="left:751.00px;top:59.53px;font-size:10px;line-height:10px;color:#7b8696;letter-spacing:-0.426px">CTA Type</div>
<div class="a" style="left:796.19px;top:60.80px;font-size:8.5px;line-height:8.5px;color:#7b8696">Ø</div>
<div class="a" style="left:811.00px;top:59.53px;font-size:10px;line-height:10px;color:#7b8696;letter-spacing:-0.193px">null</div>
<div class="a" style="left:895.00px;top:98.38px;font-size:9px;line-height:9px;color:#2a78d6;font-weight:bold;letter-spacing:-0.088px">Add Filters on Measures</div>
<div class="a" style="left:847.20px;top:657.19px;font-size:11px;line-height:11px;color:#4c586a;letter-spacing:-0.057px;-webkit-text-stroke:0.2px #4c586a">At Risk</div>
<div class="a" style="left:915.30px;top:657.19px;font-size:11px;line-height:11px;color:#4c586a;letter-spacing:0.020px;-webkit-text-stroke:0.2px #4c586a">Not at Risk</div>
</div>
</div>
<div class="a" style="left:2px;top:1px;width:1404px;height:2px;background:#2766c2"></div>
<!-- overlay -->
<div class="a" style="left:2px;top:3px;width:1404px;height:689px;background:rgba(24,20,22,.405)"></div>
<!-- modal -->
<div class="a" style="left:142px;top:102px;width:1124px;height:491px;background:#fffcfe;border-radius:4px;box-shadow:0 18px 46px -4px rgba(0,0,0,.48),0 0 8px rgba(0,0,0,.18)"></div>
<div class="L">
<svg class="a" style="left:1225px;top:116px" width="11" height="11" viewBox="0 0 11 11"><path d="M.6 .6L10.4 10.4M10.4 .6L.6 10.4" stroke="#7b8da1" stroke-width="1.3"/></svg>
<svg class="a" style="left:1163px;top:150px" width="15" height="15" viewBox="0 0 15 15"><path d="M7 0V9.5M3.5 6L7 9.5L10.5 6" fill="none" stroke="#6a88a6" stroke-width="1.1"/><path d="M1 10.5V13.3H13V10.5" fill="none" stroke="#6a88a6" stroke-width="1.2"/></svg>
<svg class="a" style="left:1193px;top:151px" width="14" height="14" viewBox="0 0 14 14"><path d="M4.5 1.5L1.5 4.5L4.5 7.5" fill="none" stroke="#98a6b6" stroke-width="1.1"/><path d="M1.8 4.5H7.5A4 4 0 0 1 7.5 12.5H3" fill="none" stroke="#98a6b6" stroke-width="1.1"/></svg>
<svg class="a" style="left:1226px;top:152px" width="11" height="11" viewBox="0 0 11 11"><path d="M5.5 0V11M0 5.5H11" stroke="#98a6b6" stroke-width="1.1"/></svg>
<svg class="a" style="left:244px;top:192px" width="7" height="8" viewBox="0 0 7 8"><path d="M.5 3L3.5 0L6.5 3Z" fill="#3f5068"/><path d="M.5 4.6L3.5 7.6L6.5 4.6Z" fill="#c3ccd6"/></svg>
<div class="a" style="left:168.2px;top:211px;width:163.5px;height:22px;border:1px solid #ccd5e0;border-radius:3px"></div>
<div class="a" style="left:192.2px;top:221px;width:0;height:0;border-left:4px solid transparent;border-right:4px solid transparent;border-top:4.5px solid #26364b"></div>
<div class="a" style="left:351.3px;top:211px;width:162.3px;height:22px;border:1px solid #ccd5e0;border-radius:3px"></div>
<div class="a" style="left:359px;top:220px;width:7.5px;height:1.3px;background:#56677c;box-shadow:0 3.8px 0 #56677c"></div>
<div class="a" style="left:375px;top:221px;width:0;height:0;border-left:4px solid transparent;border-right:4px solid transparent;border-top:4.5px solid #26364b"></div>
<svg class="a" style="left:496px;top:216.5px" width="11" height="11" viewBox="0 0 11 11"><path d="M1 2.2H10V10H1Z" fill="none" stroke="#3c4656" stroke-width="1.3"/><path d="M1 2.2H10V4H1Z" fill="#3c4656"/><path d="M3 .5V2.5M8 .5V2.5" stroke="#3c4656" stroke-width="1.2"/><rect x="3.6" y="5.6" width="2" height="2" fill="#3c4656"/></svg>
<div class="a" style="left:714.1px;top:211px;width:162.60000000000002px;height:22px;border:1px solid #ccd5e0;border-radius:3px"></div>
<div class="a" style="left:722px;top:220px;width:7.5px;height:1.3px;background:#56677c;box-shadow:0 3.8px 0 #56677c"></div>
<div class="a" style="left:738px;top:221px;width:0;height:0;border-left:4px solid transparent;border-right:4px solid transparent;border-top:4.5px solid #26364b"></div>
<svg class="a" style="left:859px;top:216.5px" width="11" height="11" viewBox="0 0 11 11"><path d="M1 2.2H10V10H1Z" fill="none" stroke="#3c4656" stroke-width="1.3"/><path d="M1 2.2H10V4H1Z" fill="#3c4656"/><path d="M3 .5V2.5M8 .5V2.5" stroke="#3c4656" stroke-width="1.2"/><rect x="3.6" y="5.6" width="2" height="2" fill="#3c4656"/></svg>
<div class="a" style="left:896.2px;top:211px;width:161.39999999999986px;height:22px;border:1px solid #ccd5e0;border-radius:3px"></div>
<div class="a" style="left:903px;top:220px;width:7.5px;height:1.3px;background:#56677c;box-shadow:0 3.8px 0 #56677c"></div>
<div class="a" style="left:920px;top:221px;width:0;height:0;border-left:4px solid transparent;border-right:4px solid transparent;border-top:4.5px solid #26364b"></div>
<div class="a" style="left:158px;top:239px;width:1092px;height:1.3px;background:#bfc7d1"></div>
<div class="a" style="left:158px;top:262.48px;width:1092px;height:22.48px;background:#f3f5f7"></div>
<div class="a" style="left:158px;top:307.44px;width:1092px;height:22.48px;background:#f3f5f7"></div>
<div class="a" style="left:158px;top:352.40px;width:1092px;height:22.48px;background:#f3f5f7"></div>
<div class="a" style="left:158px;top:397.36px;width:1092px;height:22.48px;background:#f3f5f7"></div>
<div class="a" style="left:158px;top:442.32px;width:1092px;height:22.48px;background:#f3f5f7"></div>
<div class="a" style="left:158px;top:487.28px;width:1092px;height:22.48px;background:#f3f5f7"></div>
<div class="a" style="left:150px;top:510.6px;width:1108px;height:6.2px;background:linear-gradient(180deg,#f0f0f2,#dfdfe2)"></div>
<div class="a" style="left:1030.5px;top:524px;width:71px;height:23.5px;border:1px solid #c9d3df;border-radius:12px"></div>
<div class="a" style="left:1053.5px;top:524.5px;width:1px;height:22.5px;background:#d3dbe5"></div>
<div class="a" style="left:1078.5px;top:524.5px;width:1px;height:22.5px;background:#d3dbe5"></div>
<svg class="a" style="left:1039px;top:532px" width="7" height="10" viewBox="0 0 7 10"><path d="M6 .8L1.5 5L6 9.2" fill="none" stroke="#6f7f93" stroke-width="1.1"/></svg>
<svg class="a" style="left:1087.5px;top:532px" width="7" height="10" viewBox="0 0 7 10"><path d="M1 .8L5.5 5L1 9.2" fill="none" stroke="#6f7f93" stroke-width="1.1"/></svg>
<div class="a" style="left:1142.4px;top:524.2px;width:51.3px;height:23.6px;border:1px solid #c9d3df;border-radius:12px"></div>
<div class="a" style="left:1171.8px;top:535px;width:0;height:0;border-left:3.6px solid transparent;border-right:3.6px solid transparent;border-top:4px solid #7a8898"></div>
<div class="a" style="left:142px;top:555px;width:1124px;height:1px;background:#dfe3e8"></div>
<div class="a" style="left:1106.2px;top:560.1px;width:63.6px;height:24.7px;border-radius:13px;background:#1877e6"></div>
<div class="a" style="left:1176.1px;top:560.1px;width:63.6px;height:24.7px;border:1px solid #c6d1de;border-radius:13px"></div>
<div class="a" style="left:161.80px;top:116.07px;font-size:12.2px;line-height:12.2px;color:#2b3647;letter-spacing:0.264px">Drilldown Report - # of Customers</div>
<div class="a" style="left:168.60px;top:193.37px;font-size:9.6px;line-height:9.6px;color:#5a6c83;letter-spacing:0.275px;-webkit-text-stroke:0.12px #5a6c83">CSM Full Name</div>
<div class="a" style="left:351.60px;top:193.37px;font-size:9.6px;line-height:9.6px;color:#5a6c83;letter-spacing:0.339px;-webkit-text-stroke:0.12px #5a6c83">Renewal Date</div>
<div class="a" style="left:533.50px;top:193.37px;font-size:9.6px;line-height:9.6px;color:#5a6c83;letter-spacing:0.605px;-webkit-text-stroke:0.12px #5a6c83">Stage</div>
<div class="a" style="left:714.80px;top:193.37px;font-size:9.6px;line-height:9.6px;color:#5a6c83;letter-spacing:0.110px;-webkit-text-stroke:0.12px #5a6c83">Last EBR</div>
<div class="a" style="left:896.20px;top:193.37px;font-size:9.6px;line-height:9.6px;color:#5a6c83;letter-spacing:0.580px;-webkit-text-stroke:0.12px #5a6c83"># of Customers</div>
<div class="a" style="left:1078.00px;top:193.37px;font-size:9.6px;line-height:9.6px;color:#5a6c83;letter-spacing:0.392px;-webkit-text-stroke:0.12px #5a6c83">CO Segment</div>
<div class="a" style="left:174.90px;top:217.96px;font-size:9.5px;line-height:9.5px;color:#6a7787">C</div>
<div class="a" style="left:211.80px;top:219.13px;font-size:9.3px;line-height:9.3px;color:#9098a2;letter-spacing:0.069px">Search here...</div>
<div class="a" style="left:394.90px;top:219.13px;font-size:9.3px;line-height:9.3px;color:#9098a2;letter-spacing:0.186px">Search M/d/yyyy ...</div>
<div class="a" style="left:758.00px;top:219.13px;font-size:9.3px;line-height:9.3px;color:#9098a2;letter-spacing:0.186px">Search M/d/yyyy ...</div>
<div class="a" style="left:939.60px;top:219.13px;font-size:9.3px;line-height:9.3px;color:#9098a2;letter-spacing:0.092px">Search here...</div>
<div class="a" style="left:168.40px;top:245.70px;font-size:10.4px;line-height:10.4px;color:#a7b3c1;font-style:italic;letter-spacing:-0.593px">NULL</div>
<div class="a" style="left:457.81px;top:246.29px;font-size:9.7px;line-height:9.7px;color:#343b46;letter-spacing:0.880px">11/26/2021</div>
<div class="a" style="left:533.40px;top:246.29px;font-size:9.7px;line-height:9.7px;color:#343b46;letter-spacing:0.620px">5 Adopting</div>
<div class="a" style="left:827.05px;top:246.29px;font-size:9.7px;line-height:9.7px;color:#343b46;letter-spacing:0.880px">5/10/2019</div>
<div class="a" style="left:896.40px;top:246.29px;font-size:9.7px;line-height:9.7px;color:#343b46;letter-spacing:0.620px">001A000001LmiJQIAZ</div>
<div class="a" style="left:1078.20px;top:246.29px;font-size:9.7px;line-height:9.7px;color:#343b46;letter-spacing:0.620px">Protect</div>
<div class="a" style="left:168.40px;top:268.18px;font-size:10.4px;line-height:10.4px;color:#a7b3c1;font-style:italic;letter-spacing:-0.593px">NULL</div>
<div class="a" style="left:457.08px;top:268.77px;font-size:9.7px;line-height:9.7px;color:#343b46;letter-spacing:0.880px">12/18/2021</div>
<div class="a" style="left:533.40px;top:268.77px;font-size:9.7px;line-height:9.7px;color:#343b46;letter-spacing:0.620px">5 Adopting</div>
<div class="a" style="left:827.77px;top:268.77px;font-size:9.7px;line-height:9.7px;color:#343b46;letter-spacing:0.880px">7/11/2019</div>
<div class="a" style="left:896.40px;top:268.77px;font-size:9.7px;line-height:9.7px;color:#343b46;letter-spacing:0.620px">001A000000ny4pSIAQ</div>
<div class="a" style="left:1078.20px;top:268.77px;font-size:9.7px;line-height:9.7px;color:#343b46;letter-spacing:0.620px">Protect</div>
<div class="a" style="left:168.40px;top:290.66px;font-size:10.4px;line-height:10.4px;color:#a7b3c1;font-style:italic;letter-spacing:-0.593px">NULL</div>
<div class="a" style="left:463.35px;top:291.25px;font-size:9.7px;line-height:9.7px;color:#343b46;letter-spacing:0.880px">1/31/2023</div>
<div class="a" style="left:533.40px;top:291.25px;font-size:9.7px;line-height:9.7px;color:#343b46;letter-spacing:0.620px">5 Adopting</div>
<div class="a" style="left:827.05px;top:291.25px;font-size:9.7px;line-height:9.7px;color:#343b46;letter-spacing:0.880px">9/10/2019</div>
<div class="a" style="left:896.40px;top:291.25px;font-size:9.7px;line-height:9.7px;color:#343b46;letter-spacing:0.620px">001A000001Rf7qlIAB</div>
<div class="a" style="left:1078.20px;top:291.25px;font-size:9.7px;line-height:9.7px;color:#343b46;letter-spacing:0.620px">EMEA</div>
<div class="a" style="left:168.40px;top:313.14px;font-size:10.4px;line-height:10.4px;color:#a7b3c1;font-style:italic;letter-spacing:-0.593px">NULL</div>
<div class="a" style="left:463.35px;top:313.73px;font-size:9.7px;line-height:9.7px;color:#343b46;letter-spacing:0.880px">4/30/2021</div>
<div class="a" style="left:533.40px;top:313.73px;font-size:9.7px;line-height:9.7px;color:#343b46;letter-spacing:0.620px">5 Adopting</div>
<div class="a" style="left:820.78px;top:313.73px;font-size:9.7px;line-height:9.7px;color:#343b46;letter-spacing:0.880px">10/21/2019</div>
<div class="a" style="left:896.40px;top:313.73px;font-size:9.7px;line-height:9.7px;color:#343b46;letter-spacing:0.620px">001A000001F0pUXIAZ</div>
<div class="a" style="left:1078.20px;top:313.73px;font-size:9.7px;line-height:9.7px;color:#343b46;letter-spacing:0.620px">Protect</div>
<div class="a" style="left:168.40px;top:335.62px;font-size:10.4px;line-height:10.4px;color:#a7b3c1;font-style:italic;letter-spacing:-0.593px">NULL</div>
<div class="a" style="left:463.35px;top:336.21px;font-size:9.7px;line-height:9.7px;color:#343b46;letter-spacing:0.880px">3/15/2023</div>
<div class="a" style="left:533.40px;top:336.21px;font-size:9.7px;line-height:9.7px;color:#343b46;letter-spacing:0.620px">5 Adopting</div>
<div class="a" style="left:827.05px;top:336.21px;font-size:9.7px;line-height:9.7px;color:#343b46;letter-spacing:0.880px">2/20/2020</div>
<div class="a" style="left:896.40px;top:336.21px;font-size:9.7px;line-height:9.7px;color:#343b46;letter-spacing:0.620px">001A000000ny32CIAQ</div>
<div class="a" style="left:1078.20px;top:336.21px;font-size:9.7px;line-height:9.7px;color:#343b46;letter-spacing:0.620px">Protect</div>
<div class="a" style="left:168.40px;top:358.10px;font-size:10.4px;line-height:10.4px;color:#a7b3c1;font-style:italic;letter-spacing:-0.593px">NULL</div>
<div class="a" style="left:463.35px;top:358.69px;font-size:9.7px;line-height:9.7px;color:#343b46;letter-spacing:0.880px">2/24/2022</div>
<div class="a" style="left:533.40px;top:358.69px;font-size:9.7px;line-height:9.7px;color:#343b46;letter-spacing:0.620px">5 Adopting</div>
<div class="a" style="left:827.05px;top:358.69px;font-size:9.7px;line-height:9.7px;color:#343b46;letter-spacing:0.880px">9/12/2019</div>
<div class="a" style="left:896.40px;top:358.69px;font-size:9.7px;line-height:9.7px;color:#343b46;letter-spacing:0.620px">001A000001DXREdIAP</div>
<div class="a" style="left:1078.20px;top:358.69px;font-size:9.7px;line-height:9.7px;color:#343b46;letter-spacing:0.620px">EMEA</div>
<div class="a" style="left:168.40px;top:380.58px;font-size:10.4px;line-height:10.4px;color:#a7b3c1;font-style:italic;letter-spacing:-0.593px">NULL</div>
<div class="a" style="left:463.35px;top:381.17px;font-size:9.7px;line-height:9.7px;color:#343b46;letter-spacing:0.880px">5/15/2024</div>
<div class="a" style="left:533.40px;top:381.17px;font-size:9.7px;line-height:9.7px;color:#343b46;letter-spacing:0.620px">4 Launched</div>
<div class="a" style="left:852.00px;top:380.58px;font-size:10.4px;line-height:10.4px;color:#a7b3c1;font-style:italic;letter-spacing:-0.593px">NULL</div>
<div class="a" style="left:896.40px;top:381.17px;font-size:9.7px;line-height:9.7px;color:#343b46;letter-spacing:0.620px">001A0000014HHAvIAO</div>
<div class="a" style="left:1078.20px;top:381.17px;font-size:9.7px;line-height:9.7px;color:#343b46;letter-spacing:0.620px">Maintain</div>
<div class="a" style="left:168.40px;top:403.06px;font-size:10.4px;line-height:10.4px;color:#a7b3c1;font-style:italic;letter-spacing:-0.593px">NULL</div>
<div class="a" style="left:463.35px;top:403.65px;font-size:9.7px;line-height:9.7px;color:#343b46;letter-spacing:0.880px">9/23/2021</div>
<div class="a" style="left:533.40px;top:403.65px;font-size:9.7px;line-height:9.7px;color:#343b46;letter-spacing:0.620px">5 Adopting</div>
<div class="a" style="left:833.32px;top:403.65px;font-size:9.7px;line-height:9.7px;color:#343b46;letter-spacing:0.880px">6/2/2020</div>
<div class="a" style="left:896.40px;top:403.65px;font-size:9.7px;line-height:9.7px;color:#343b46;letter-spacing:0.620px">001A000000sqmC3IAI</div>
<div class="a" style="left:1078.20px;top:403.65px;font-size:9.7px;line-height:9.7px;color:#343b46;letter-spacing:0.620px">Protect</div>
<div class="a" style="left:168.40px;top:425.54px;font-size:10.4px;line-height:10.4px;color:#a7b3c1;font-style:italic;letter-spacing:-0.593px">NULL</div>
<div class="a" style="left:463.35px;top:426.13px;font-size:9.7px;line-height:9.7px;color:#343b46;letter-spacing:0.880px">1/29/2023</div>
<div class="a" style="left:533.40px;top:426.13px;font-size:9.7px;line-height:9.7px;color:#343b46;letter-spacing:0.620px">5 Adopting</div>
<div class="a" style="left:852.00px;top:425.54px;font-size:10.4px;line-height:10.4px;color:#a7b3c1;font-style:italic;letter-spacing:-0.593px">NULL</div>
<div class="a" style="left:896.40px;top:426.13px;font-size:9.7px;line-height:9.7px;color:#343b46;letter-spacing:0.620px">0011N00001cfpH6QAI</div>
<div class="a" style="left:1078.20px;top:426.13px;font-size:9.7px;line-height:9.7px;color:#343b46;letter-spacing:0.620px">EMEA</div>
<div class="a" style="left:168.40px;top:448.02px;font-size:10.4px;line-height:10.4px;color:#a7b3c1;font-style:italic;letter-spacing:-0.593px">NULL</div>
<div class="a" style="left:463.35px;top:448.61px;font-size:9.7px;line-height:9.7px;color:#343b46;letter-spacing:0.880px">5/13/2021</div>
<div class="a" style="left:533.40px;top:448.61px;font-size:9.7px;line-height:9.7px;color:#343b46;letter-spacing:0.620px">5 Adopting</div>
<div class="a" style="left:820.78px;top:448.61px;font-size:9.7px;line-height:9.7px;color:#343b46;letter-spacing:0.880px">12/17/2019</div>
<div class="a" style="left:896.40px;top:448.61px;font-size:9.7px;line-height:9.7px;color:#343b46;letter-spacing:0.620px">001A000000v1wmvIAA</div>
<div class="a" style="left:1078.20px;top:448.61px;font-size:9.7px;line-height:9.7px;color:#343b46;letter-spacing:0.620px">Grow</div>
<div class="a" style="left:168.40px;top:470.50px;font-size:10.4px;line-height:10.4px;color:#a7b3c1;font-style:italic;letter-spacing:-0.593px">NULL</div>
<div class="a" style="left:463.35px;top:471.09px;font-size:9.7px;line-height:9.7px;color:#343b46;letter-spacing:0.880px">1/23/2022</div>
<div class="a" style="left:533.40px;top:471.09px;font-size:9.7px;line-height:9.7px;color:#343b46;letter-spacing:0.620px">5 Adopting</div>
<div class="a" style="left:827.05px;top:471.09px;font-size:9.7px;line-height:9.7px;color:#343b46;letter-spacing:0.880px">7/14/2020</div>
<div class="a" style="left:896.40px;top:471.09px;font-size:9.7px;line-height:9.7px;color:#343b46;letter-spacing:0.620px">001A0000014J74GIAS</div>
<div class="a" style="left:1078.20px;top:471.09px;font-size:9.7px;line-height:9.7px;color:#343b46;letter-spacing:0.620px">Maintain</div>
<div class="a" style="left:168.40px;top:492.98px;font-size:10.4px;line-height:10.4px;color:#a7b3c1;font-style:italic;letter-spacing:-0.593px">NULL</div>
<div class="a" style="left:463.35px;top:493.57px;font-size:9.7px;line-height:9.7px;color:#343b46;letter-spacing:0.880px">1/14/2023</div>
<div class="a" style="left:533.40px;top:493.57px;font-size:9.7px;line-height:9.7px;color:#343b46;letter-spacing:0.620px">5 Adopting</div>
<div class="a" style="left:821.51px;top:493.57px;font-size:9.7px;line-height:9.7px;color:#343b46;letter-spacing:0.880px">11/27/2018</div>
<div class="a" style="left:896.40px;top:493.57px;font-size:9.7px;line-height:9.7px;color:#343b46;letter-spacing:0.620px">001A000000zLOPcIAO</div>
<div class="a" style="left:1078.20px;top:493.57px;font-size:9.7px;line-height:9.7px;color:#343b46;letter-spacing:0.620px">Maintain</div>
<div class="a" style="left:159.00px;top:530.87px;font-size:9.6px;line-height:9.6px;color:#8597ab;letter-spacing:-0.359px">Total number of records:</div>
<div class="a" style="left:266.60px;top:531.21px;font-size:9.2px;line-height:9.2px;color:#1f6fd0;font-weight:bold;letter-spacing:-0.225px">Click here</div>
<div class="a" style="left:912.70px;top:531.03px;font-size:10px;line-height:10px;color:#5a6c82;letter-spacing:-0.213px">Showing 1 to 50 record(s)</div>
<div class="a" style="left:1063.08px;top:529.91px;font-size:10.5px;line-height:10.5px;color:#4a5668">1</div>
<div class="a" style="left:1110.70px;top:530.50px;font-size:9.8px;line-height:9.8px;color:#6b7a8c;letter-spacing:-0.505px">Show</div>
<div class="a" style="left:1155.90px;top:530.59px;font-size:11px;line-height:11px;color:#2a313b;letter-spacing:-0.250px">50</div>
<div class="a" style="left:1204.60px;top:530.70px;font-size:9.8px;line-height:9.8px;color:#6b7a8c;letter-spacing:-0.270px">per page</div>
<div class="a" style="left:1127.80px;top:567.87px;font-size:9.6px;line-height:9.6px;color:#ffffff;letter-spacing:-0.558px;-webkit-text-stroke:0.35px #ffffff">Save</div>
<div class="a" style="left:1193.70px;top:567.87px;font-size:9.6px;line-height:9.6px;color:#1f6fd0;letter-spacing:-0.255px;-webkit-text-stroke:0.35px #1f6fd0">Cancel</div>
</div>
<div class="L">

</div>
</body></html>
